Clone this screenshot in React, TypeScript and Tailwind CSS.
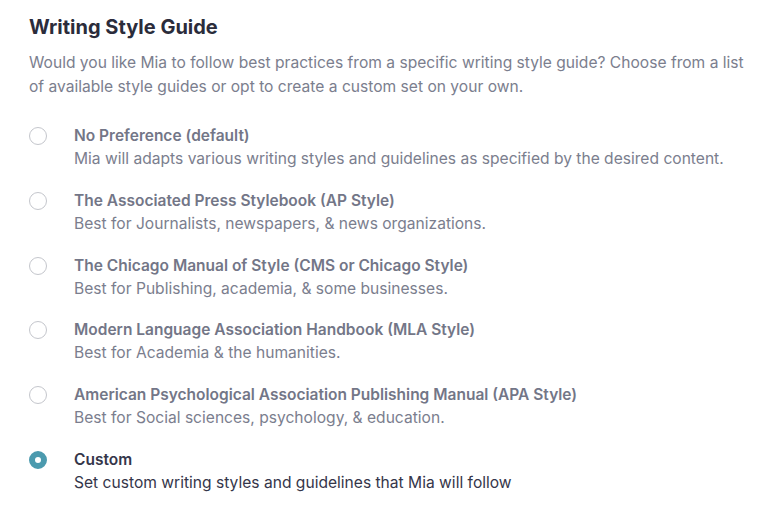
import { useState } from 'react';

const options = [
  { title: 'No Preference (default)', desc: 'Mia will adapts various writing styles and guidelines as specified by the desired content.' },
  { title: 'The Associated Press Stylebook (AP Style)', desc: 'Best for Journalists, newspapers, & news organizations.' },
  { title: 'The Chicago Manual of Style (CMS or Chicago Style)', desc: 'Best for Publishing, academia, & some businesses.' },
  { title: 'Modern Language Association Handbook (MLA Style)', desc: 'Best for Academia & the humanities.' },
  { title: 'American Psychological Association Publishing Manual (APA Style)', desc: 'Best for Social sciences, psychology, & education.' },
  { title: 'Custom', desc: 'Set custom writing styles and guidelines that Mia will follow' },
];

export default function App() {
  const [selected, setSelected] = useState(5);

  return (
    <div className="min-h-screen bg-white pl-[29px] pr-[20px] pt-[14px] font-['Inter',sans-serif]">
      <h2 className="text-[20px] font-bold leading-[26px] text-[#2b2c3b]">Writing Style Guide</h2>
      <p className="mt-[11px] text-[15.6px] leading-[24px] text-[#7b7e8e]">
        Would you like Mia to follow best practices from a specific writing style guide? Choose from a list of available style guides or opt to create a custom set on your own.
      </p>

      <div className="mt-[25px] flex flex-col gap-[17.8px]">
        {options.map((o, i) => {
          const active = selected === i;
          return (
            <label key={o.title} className="flex cursor-pointer items-start" onClick={() => setSelected(i)}>
              <span className="flex h-[24px] w-[45px] shrink-0 items-center">
                <span
                  className={
                    active
                      ? 'h-[18px] w-[18px] rounded-full border-[6px] border-[#4b9aae] bg-white'
                      : 'h-[18px] w-[18px] rounded-full border border-[#c4c6cc] bg-white'
                  }
                />
              </span>
              <span className="flex flex-col">
                <span className={`text-[15.5px] font-semibold leading-[23px] ${active ? 'text-[#35364a]' : 'text-[#737687]'}`}>{o.title}</span>
                <span className={`text-[15.6px] leading-[24px] ${active ? 'text-[#35364a]' : 'text-[#7b7e8e]'}`}>{o.desc}</span>
              </span>
            </label>
          );
        })}
      </div>
    </div>
  );
}
